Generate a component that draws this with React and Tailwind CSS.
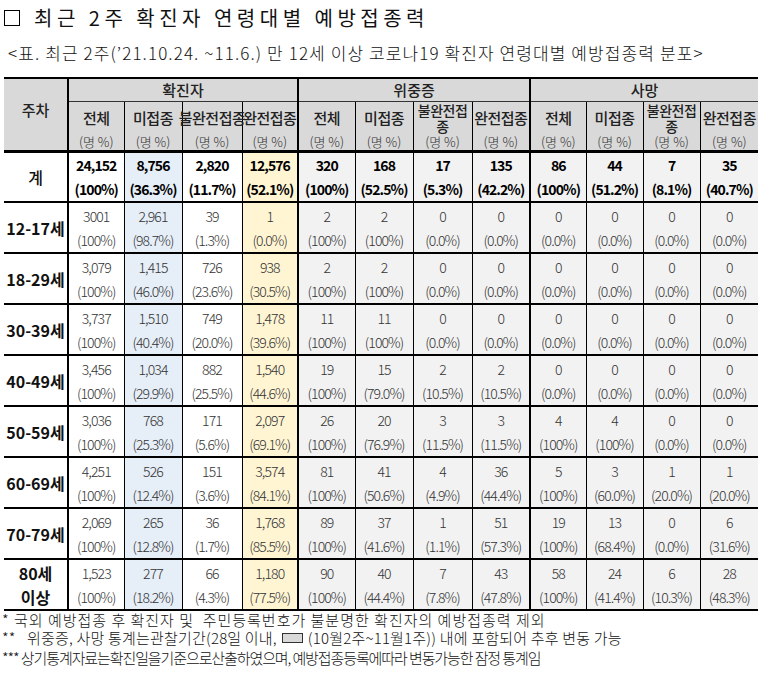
import React from 'react';

const FONT = { fontFamily: '"Noto Sans CJK KR", "Noto Sans", sans-serif' };

const colWidths = [64, 56, 58, 60, 56, 57, 58, 59, 58, 56, 57, 57, 58];

const rows = [
  {
    label: ['계'],
    total: true,
    cells: [
      ['24,152', '(100%)'], ['8,756', '(36.3%)'], ['2,820', '(11.7%)'], ['12,576', '(52.1%)'],
      ['320', '(100%)'], ['168', '(52.5%)'], ['17', '(5.3%)'], ['135', '(42.2%)'],
      ['86', '(100%)'], ['44', '(51.2%)'], ['7', '(8.1%)'], ['35', '(40.7%)'],
    ],
  },
  {
    label: ['12-17세'],
    cells: [
      ['3001', '(100%)'], ['2,961', '(98.7%)'], ['39', '(1.3%)'], ['1', '(0.0%)'],
      ['2', '(100%)'], ['2', '(100%)'], ['0', '(0.0%)'], ['0', '(0.0%)'],
      ['0', '(0.0%)'], ['0', '(0.0%)'], ['0', '(0.0%)'], ['0', '(0.0%)'],
    ],
  },
  {
    label: ['18-29세'],
    cells: [
      ['3,079', '(100%)'], ['1,415', '(46.0%)'], ['726', '(23.6%)'], ['938', '(30.5%)'],
      ['2', '(100%)'], ['2', '(100%)'], ['0', '(0.0%)'], ['0', '(0.0%)'],
      ['0', '(0.0%)'], ['0', '(0.0%)'], ['0', '(0.0%)'], ['0', '(0.0%)'],
    ],
  },
  {
    label: ['30-39세'],
    cells: [
      ['3,737', '(100%)'], ['1,510', '(40.4%)'], ['749', '(20.0%)'], ['1,478', '(39.6%)'],
      ['11', '(100%)'], ['11', '(100%)'], ['0', '(0.0%)'], ['0', '(0.0%)'],
      ['0', '(0.0%)'], ['0', '(0.0%)'], ['0', '(0.0%)'], ['0', '(0.0%)'],
    ],
  },
  {
    label: ['40-49세'],
    cells: [
      ['3,456', '(100%)'], ['1,034', '(29.9%)'], ['882', '(25.5%)'], ['1,540', '(44.6%)'],
      ['19', '(100%)'], ['15', '(79.0%)'], ['2', '(10.5%)'], ['2', '(10.5%)'],
      ['0', '(0.0%)'], ['0', '(0.0%)'], ['0', '(0.0%)'], ['0', '(0.0%)'],
    ],
  },
  {
    label: ['50-59세'],
    cells: [
      ['3,036', '(100%)'], ['768', '(25.3%)'], ['171', '(5.6%)'], ['2,097', '(69.1%)'],
      ['26', '(100%)'], ['20', '(76.9%)'], ['3', '(11.5%)'], ['3', '(11.5%)'],
      ['4', '(100%)'], ['4', '(100%)'], ['0', '(0.0%)'], ['0', '(0.0%)'],
    ],
  },
  {
    label: ['60-69세'],
    cells: [
      ['4,251', '(100%)'], ['526', '(12.4%)'], ['151', '(3.6%)'], ['3,574', '(84.1%)'],
      ['81', '(100%)'], ['41', '(50.6%)'], ['4', '(4.9%)'], ['36', '(44.4%)'],
      ['5', '(100%)'], ['3', '(60.0%)'], ['1', '(20.0%)'], ['1', '(20.0%)'],
    ],
  },
  {
    label: ['70-79세'],
    cells: [
      ['2,069', '(100%)'], ['265', '(12.8%)'], ['36', '(1.7%)'], ['1,768', '(85.5%)'],
      ['89', '(100%)'], ['37', '(41.6%)'], ['1', '(1.1%)'], ['51', '(57.3%)'],
      ['19', '(100%)'], ['13', '(68.4%)'], ['0', '(0.0%)'], ['6', '(31.6%)'],
    ],
  },
  {
    label: ['80세', '이상'],
    cells: [
      ['1,523', '(100%)'], ['277', '(18.2%)'], ['66', '(4.3%)'], ['1,180', '(77.5%)'],
      ['90', '(100%)'], ['40', '(44.4%)'], ['7', '(7.8%)'], ['43', '(47.8%)'],
      ['58', '(100%)'], ['24', '(41.4%)'], ['6', '(10.3%)'], ['28', '(48.3%)'],
    ],
  },
];

// right border per data column (0-based over the 12 data columns)
function rightBorder(i) {
  if (i === 11) return 'border-r-0';
  if (i === 3 || i === 7) return 'border-r-2 border-r-black';
  return 'border-r border-r-black';
}

function cellBg(i) {
  if (i === 1) return 'bg-[#e6eef8]';
  if (i === 3) return 'bg-[#fff5d3]';
  if (i >= 4) return 'bg-[#f2f2f2]';
  return 'bg-white';
}

function SubHead({ label, i }) {
  const two = label.length > 1;
  return (
    <th className={`p-0 align-top font-medium bg-[#d9d9d9] border-b-[3px] border-b-black ${rightBorder(i)}`}>
      <div className="flex flex-col h-[48px]">
        <div className="h-[33px] flex items-center justify-center">
          <div
            className={`text-[#222] whitespace-nowrap tracking-[-0.5px] ${
              two ? 'text-[14px] leading-[16px]' : 'text-[15px] leading-[16px]'
            }`}
          >
            {label.map((l, k) => (
              <div key={k}>{l}</div>
            ))}
          </div>
        </div>
        <div className="h-[15px] text-[13px] leading-[14px] font-light text-[#333] whitespace-nowrap">(명 %)</div>
      </div>
    </th>
  );
}

export default function App() {
  const sub = [
    ['전체'], ['미접종'], ['불완전접종'], ['완전접종'],
    ['전체'], ['미접종'], ['불완전접', '종'], ['완전접종'],
    ['전체'], ['미접종'], ['불완전접', '종'], ['완전접종'],
  ];

  return (
    <div className="w-[758px] h-[678px] bg-white overflow-hidden text-[#222]" style={FONT}>
      {/* Title */}
      <div className="h-[36px] flex items-center pl-[4px] text-[20px] tracking-[4.5px] text-[#111] whitespace-nowrap">
        <span className="inline-block w-[16px] h-[16px] border-[1.5px] border-black mr-[14px]" />
        <span>최근 2주 확진자 연령대별 예방접종력</span>
      </div>

      {/* Subtitle */}
      <div className="h-[34px] flex items-center pl-[8px] text-[17px] font-light text-[#111] tracking-[1.1px] whitespace-nowrap">
        &lt;표. 최근 2주(’21.10.24. ~11.6.) 만 12세 이상 코로나19 확진자 연령대별 예방접종력 분포&gt;
      </div>

      {/* Table */}
      <div className="mt-[7px] pl-[4px]">
        <table className="table-fixed border-collapse w-[754px]">
          <colgroup>
            {colWidths.map((w, i) => (
              <col key={i} style={{ width: w }} />
            ))}
          </colgroup>
          <thead>
            <tr className="h-[23px]">
              <th
                rowSpan={2}
                className="p-0 bg-[#d9d9d9] border-t-2 border-t-black border-r-2 border-r-black border-b-[3px] border-b-black align-top pt-[20px] text-[15px] font-medium text-[#222]"
              >
                주차
              </th>
              <th colSpan={4} className="p-0 bg-[#d9d9d9] border-t-2 border-t-black border-r-2 border-r-black border-b border-b-[#333] text-[15px] font-medium leading-[20px]">
                확진자
              </th>
              <th colSpan={4} className="p-0 bg-[#d9d9d9] border-t-2 border-t-black border-r-2 border-r-black border-b border-b-[#333] text-[15px] font-medium leading-[20px]">
                위중증
              </th>
              <th colSpan={4} className="p-0 bg-[#d9d9d9] border-t-2 border-t-black border-b border-b-[#333] text-[15px] font-medium leading-[20px]">
                사망
              </th>
            </tr>
            <tr>
              {sub.map((label, i) => (
                <SubHead key={i} label={label} i={i} />
              ))}
            </tr>
          </thead>
          <tbody>
            {rows.map((row, r) => (
              <tr key={r} className="h-[51px]">
                <td className="p-0 bg-white border-r-2 border-r-black border-b-2 border-b-black text-center text-[16px] font-bold leading-[24px] text-[#111] whitespace-nowrap">
                  {row.label.map((l, k) => (
                    <div key={k} className={row.total ? 'font-medium' : ''}>{l}</div>
                  ))}
                </td>
                {row.cells.map(([n, p], i) => (
                  <td
                    key={i}
                    className={`p-0 text-center border-b-2 border-b-black ${rightBorder(i)} ${cellBg(i)}`}
                  >
                    <div
                      className={`leading-[24px] text-[14px] tracking-[-0.9px] whitespace-nowrap ${
                        row.total ? 'font-bold text-black' : 'font-light text-[#333]'
                      }`}
                    >
                      <div>{n}</div>
                      <div>{p}</div>
                    </div>
                  </td>
                ))}
              </tr>
            ))}
          </tbody>
        </table>
      </div>

      {/* Footnotes */}
      <div className="text-[15px] font-light text-[#111] whitespace-nowrap">
        <div className="leading-[18px] pl-[2px] tracking-[1px]">
          * 국외 예방접종 후 확진자 및&nbsp; 주민등록번호가 불분명한 확진자의 예방접종력 제외
        </div>
        <div className="leading-[18px] pl-[2px] tracking-[0.2px] flex items-center">
          <span className="w-[25px]">**</span>
          <span>위중증, 사망 통계는관찰기간(28일 이내,</span>
          <span className="inline-block w-[21px] h-[10px] bg-[#d9d9d9] border border-[#333] mx-[5px]" />
          <span>(10월2주~11월1주)) 내에 포함되어 추후 변동 가능</span>
        </div>
        <div className="leading-[18px] pl-[2px] mt-[2px] tracking-[-1.1px]">
          *** 상기통계자료는확진일을기준으로산출하였으며, 예방접종등록에따라 변동가능한 잠정 통계임
        </div>
      </div>
    </div>
  );
}
